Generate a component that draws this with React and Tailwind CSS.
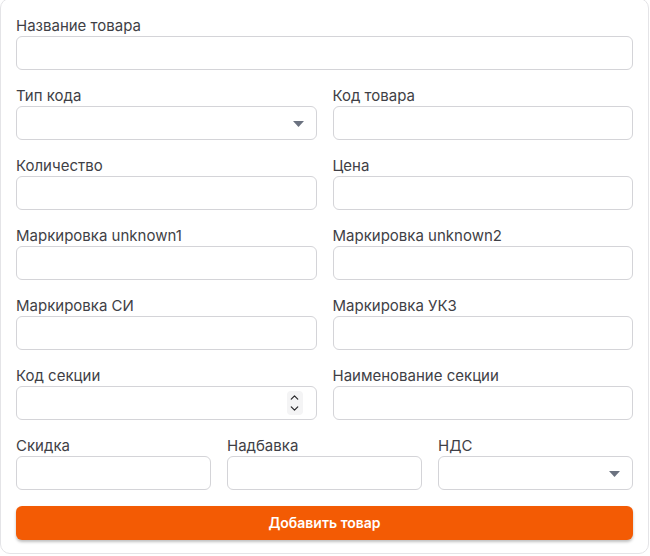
import { ChevronUp, ChevronDown } from 'lucide-react';

const inputCls =
  'w-full h-[34px] rounded-[6px] border border-[#d4d4d8] bg-white px-3 text-sm text-[#27272a] outline-none';

function Field({ label, children }) {
  return (
    <div className="flex flex-col">
      <label className="text-[15px] leading-5 text-[#3f3f46]">{label}</label>
      {children}
    </div>
  );
}

function TextInput() {
  return <input type="text" className={inputCls} />;
}

function SelectInput() {
  return (
    <div className="relative">
      <div className={inputCls} />
      <svg
        className="absolute right-[13px] top-[15px]"
        width="11"
        height="6"
        viewBox="0 0 11 6"
      >
        <path d="M0 0h11L5.5 6z" fill="#6b7280" />
      </svg>
    </div>
  );
}

function NumberInput() {
  return (
    <div className="relative">
      <div className={inputCls} />
      <div className="absolute right-[14px] top-[5px] w-[16px] h-[24px] rounded-[4px] bg-[#f4f4f5] flex flex-col items-center justify-center">
        <ChevronUp size={13} strokeWidth={2.25} className="text-[#27272a] -mb-[1px]" />
        <ChevronDown size={13} strokeWidth={2.25} className="text-[#27272a] -mt-[1px]" />
      </div>
    </div>
  );
}

export default function App() {
  return (
    <div
      className="w-[650px] h-[556px] bg-white"
      style={{ fontFamily: "Inter, 'Noto Sans', sans-serif" }}
    >
      <div className="w-[649px] -mt-[2px] border border-[#e4e4e7] rounded-[10px] px-[15px] pt-[17px] pb-[13px] flex flex-col gap-4">
        <Field label="Название товара">
          <TextInput />
        </Field>

        <div className="grid grid-cols-2 gap-x-4 gap-y-4">
          <Field label="Тип кода">
            <SelectInput />
          </Field>
          <Field label="Код товара">
            <TextInput />
          </Field>
          <Field label="Количество">
            <TextInput />
          </Field>
          <Field label="Цена">
            <TextInput />
          </Field>
          <Field label="Маркировка unknown1">
            <TextInput />
          </Field>
          <Field label="Маркировка unknown2">
            <TextInput />
          </Field>
          <Field label="Маркировка СИ">
            <TextInput />
          </Field>
          <Field label="Маркировка УКЗ">
            <TextInput />
          </Field>
          <Field label="Код секции">
            <NumberInput />
          </Field>
          <Field label="Наименование секции">
            <TextInput />
          </Field>
        </div>

        <div className="grid grid-cols-3 gap-4">
          <Field label="Скидка">
            <TextInput />
          </Field>
          <Field label="Надбавка">
            <TextInput />
          </Field>
          <Field label="НДС">
            <SelectInput />
          </Field>
        </div>

        <button className="h-[34px] w-full rounded-[6px] bg-[#f35b04] text-white text-sm font-semibold shadow-[0_2px_3px_rgba(0,0,0,0.25)]">
          Добавить товар
        </button>
      </div>
    </div>
  );
}
